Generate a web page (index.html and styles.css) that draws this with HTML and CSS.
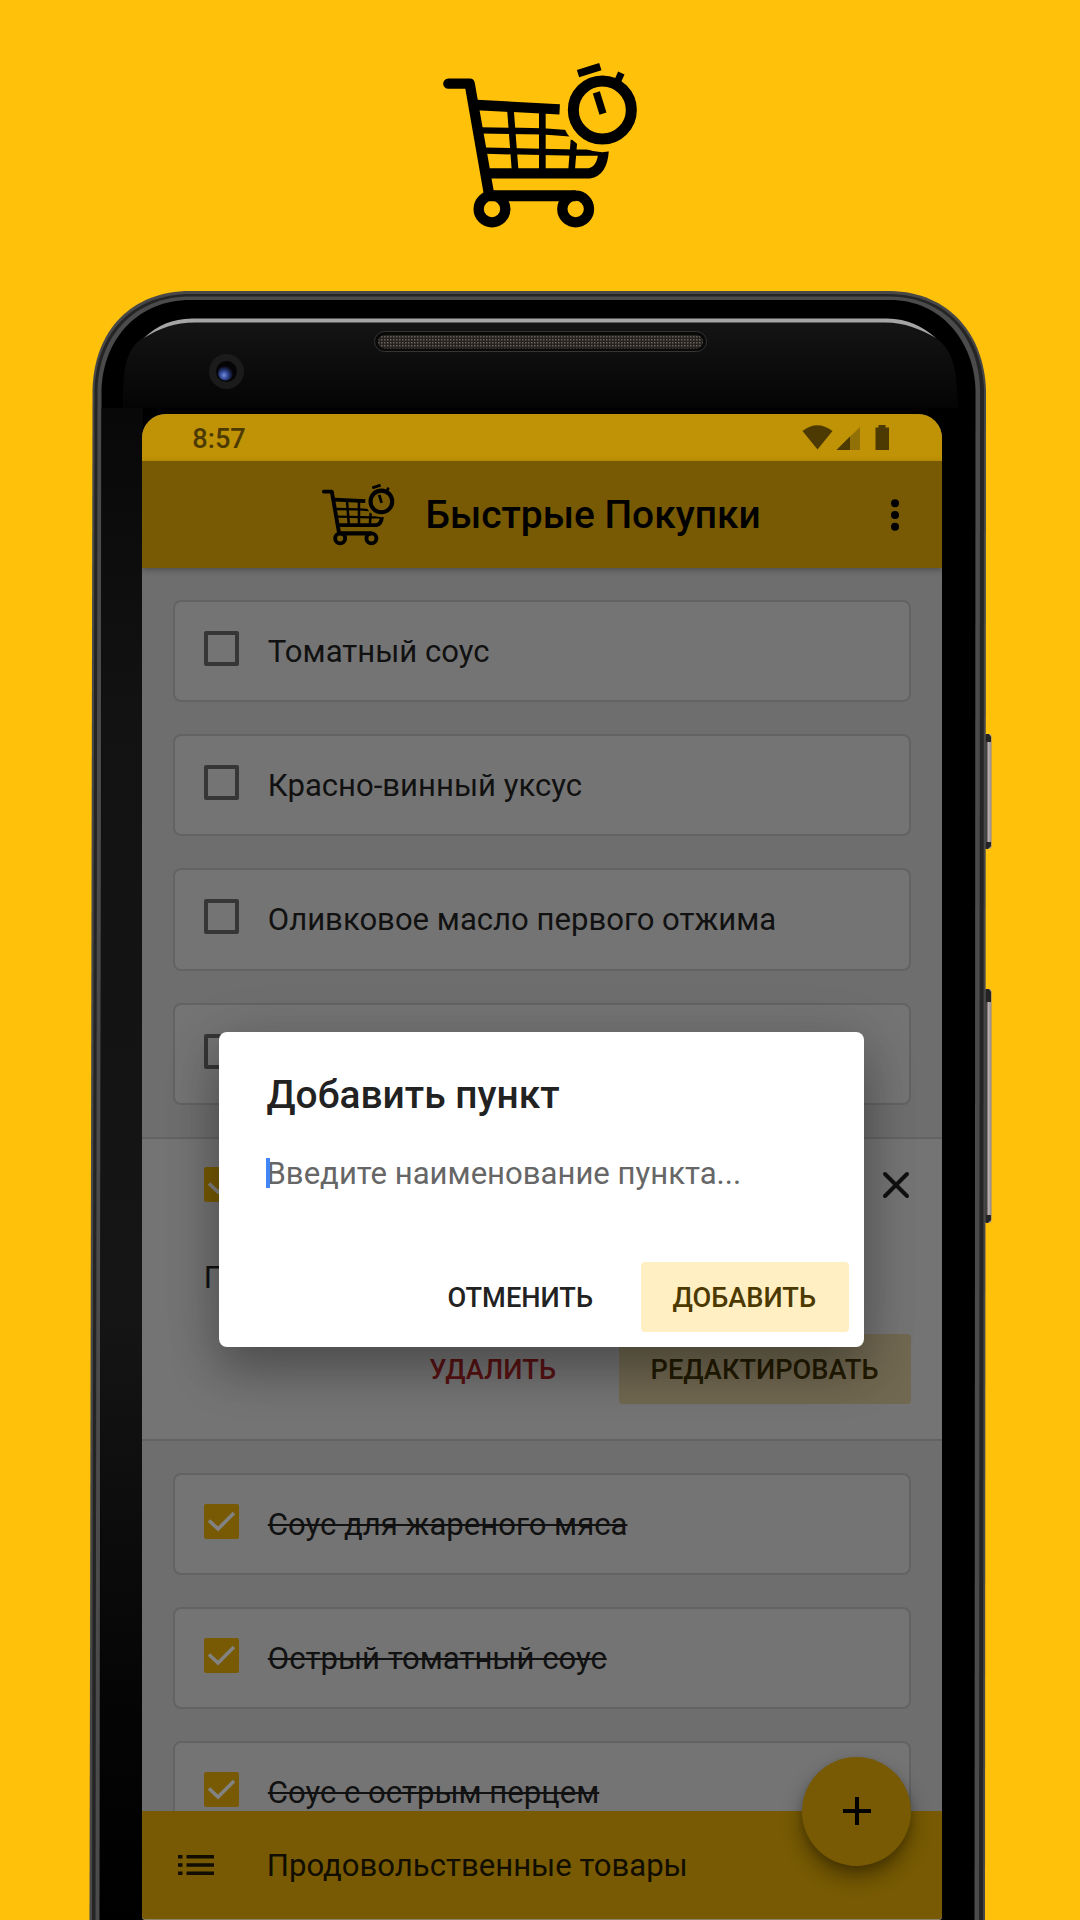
FILE: index.html
```html
<!DOCTYPE html>
<html lang="ru">
<head>
<meta charset="utf-8">
<title>Быстрые Покупки</title>
<link rel="stylesheet" href="styles.css">
</head>
<body>
<svg width="0" height="0" class="defs" aria-hidden="true">
  <mask id="around-watch" maskUnits="userSpaceOnUse" x="0" y="0" width="660" height="570">
    <rect width="660" height="570" fill="#fff"/><circle cx="517" cy="180" r="127" fill="#000"/>
  </mask>
  <symbol id="cart" viewBox="0 0 660 570">
    <g fill="none" stroke="currentColor" mask="url(#around-watch)">
      <path d="M55 101H119L177 432" stroke-width="31" stroke-linecap="round" stroke-linejoin="round"/>
      <path d="M140 165L389 178" stroke-width="31"/>
      <path d="M150 241L340 244L420 250M165 302L437 308H530" stroke-width="19"/>
      <path d="M241 175L256 370M337 180V370M432 270L424 370" stroke-width="20"/>
      <path d="M178 370H478Q517 364 521 302" stroke-width="31"/>
      <path d="M178 437H437" stroke-width="33"/>
      <circle cx="186" cy="477" r="40" stroke-width="31"/>
      <circle cx="437" cy="477" r="40" stroke-width="31"/>
    </g>
    <g fill="none" stroke="currentColor">
      <circle cx="517" cy="180" r="87" stroke-width="33"/>
      <path d="M499 127L519 191" stroke-width="22"/>
      <path d="M444 71L511 50" stroke-width="23"/>
      <path d="M574 69L561 98" stroke-width="21"/>
    </g>
  </symbol>
  <symbol id="tick" viewBox="0 0 35 35"><path d="M5 16.500L14 25L30 9" fill="none" stroke="currentColor" stroke-width="3.600"/></symbol>
</svg>

<svg class="device" viewBox="0 0 1080 1920" aria-hidden="true">
  <defs>
    <linearGradient id="forehead" x1="0" y1="0" x2="0" y2="1"><stop offset="0" stop-color="#151515"/><stop offset="1" stop-color="#040404"/></linearGradient>
    <linearGradient id="side" x1="0" y1="0" x2="0" y2="1"><stop offset="0" stop-color="#080808"/><stop offset=".2" stop-color="#121212"/><stop offset=".6" stop-color="#151515"/><stop offset=".85" stop-color="#050505"/><stop offset="1" stop-color="#000"/></linearGradient>
    <linearGradient id="key" x1="0" y1="0" x2="1" y2="0"><stop offset="0" stop-color="#2b2728"/><stop offset=".35" stop-color="#4a4445"/><stop offset=".6" stop-color="#b9b0b1"/><stop offset="1" stop-color="#8e8586"/></linearGradient>
    <radialGradient id="lens" cx=".4" cy=".65" r=".6"><stop offset="0" stop-color="#6f8be0"/><stop offset=".5" stop-color="#2c3f86"/><stop offset="1" stop-color="#07080f"/></radialGradient>
    <pattern id="mesh" width="3" height="3" patternUnits="userSpaceOnUse"><rect width="3" height="3" fill="#26231f"/><rect width="1.500" height="1.500" fill="#67615a"/></pattern>
  </defs>
  <rect x="984" y="734" width="7.500" height="115" rx="3" fill="url(#key)"/>
  <rect x="984" y="989" width="7.500" height="234" rx="3" fill="url(#key)"/>
  <path d="M986 734h3l2 3v5h-5zM986 842h5v4l-3 3h-2zM986 989h3l2 3v10h-5zM986 1215h5v5l-3 3h-2z" fill="#252323"/>
  <path d="M89.500 1920L92.500 390C94 330 132 291 190 291H890C950 292 984 335 986 390L985 1920Z" fill="#484848"/>
  <path d="M92 1920L94.500 390C96 332 134 294 190 294H890C948 295 982 336 984 390L983 1920Z" fill="#252525"/>
  <path d="M95.500 1920L97.500 390C99 334 136 296.500 190 296.500H890C945 297 979 337 980 390L979 1920Z" fill="#4b4b4b"/>
  <path d="M99.500 1920L101.500 390C103 338 139 300 190 300H890C941 300 974 341 975.500 390L974.500 1920Z" fill="#000"/>
  <path d="M123 408V390C124 360 130 346 144 337C158 325 172 319 192 319H887C908 319 922 326 936 338C952 350 957 365 958 408Z" fill="url(#forehead)"/>
  <path d="M101.500 408H143V1920H100Z" fill="url(#side)"/>
  <path d="M144 338C158 325 172 319 192 318.500H887C908 319 922 326 936 338C920 329 905 322.500 885 322.500H195C175 322.500 160 328 144 338Z" fill="#a5a5a5"/>
  <rect x="374.500" y="331.500" width="332" height="20" rx="10" fill="#090909" stroke="#353432"/>
  <rect x="378" y="335" width="325" height="13.500" rx="6.700" fill="url(#mesh)"/>
  <circle cx="226.500" cy="371.500" r="17.500" fill="#1c1b1b"/>
  <circle cx="226.500" cy="371.500" r="10.500" fill="#050508"/>
  <circle cx="225.500" cy="373" r="7.500" fill="url(#lens)"/>
</svg>

<main class="poster">
  <svg class="logo"><use href="#cart"/></svg>

  <div class="screen">
    <div class="status">
      <span class="clock">8:57</span>
      <svg class="status-icons" viewBox="0 0 90 28">
        <path d="M.500 7Q15-4.500 30.500 7L15.500 25.500Z" fill="#4c3a02"/>
        <path d="M34.500 26H58V3Z" fill="#917007"/><path d="M34.500 26H48V12.500Z" fill="#4c3a02"/>
        <path d="M73.500 3.500h3V1h7v2.500h3.500V26H73.500Z" fill="#4c3a02"/>
      </svg>
    </div>
    <header class="appbar">
      <svg class="brand"><use href="#cart"/></svg>
      <h1>Быстрые Покупки</h1>
      <svg class="more" viewBox="0 0 10 34"><circle cx="5" cy="5.300" r="4"/><circle cx="5" cy="17" r="4"/><circle cx="5" cy="28.700" r="4"/></svg>
    </header>

    <section class="list">
      <div class="card"><i class="box"></i><span>Томатный соус</span></div>
      <div class="card"><i class="box"></i><span>Красно-винный уксус</span></div>
      <div class="card"><i class="box"></i><span>Оливковое масло первого отжима</span></div>
      <div class="card"><i class="box"></i></div>
      <article class="open">
        <div class="open-head">
          <svg class="box checked"><use href="#tick"/></svg>
          <svg class="close" viewBox="0 0 28 28"><path d="M3 3L25 25M25 3L3 25"/></svg>
        </div>
        <p class="note">П</p>
        <div class="open-actions">
          <span class="btn delete">УДАЛИТЬ</span>
          <span class="btn edit">РЕДАКТИРОВАТЬ</span>
        </div>
      </article>
      <div class="card done"><svg class="box checked"><use href="#tick"/></svg><span>Соус для жареного мяса</span></div>
      <div class="card done"><svg class="box checked"><use href="#tick"/></svg><span>Острый томатный соус</span></div>
      <div class="card done"><svg class="box checked"><use href="#tick"/></svg><span>Соус с острым перцем</span></div>
    </section>

    <footer class="bottombar">
      <svg class="menu" viewBox="0 0 36 20"><path d="M0 1.800h4.500M8.500 1.800H36M0 10h4.500M8.500 10H36M0 18.200h4.500M8.500 18.200H36"/></svg>
      <span>Продовольственные товары</span>
    </footer>
    <div class="fab"><svg viewBox="0 0 28 28"><path d="M0 14H28M14 0V28"/></svg></div>

    <div class="dialog">
      <h2>Добавить пункт</h2>
      <p class="field">Введите наименование пункта...</p>
      <div class="dialog-actions">
        <span class="btn cancel">ОТМЕНИТЬ</span>
        <span class="btn add">ДОБАВИТЬ</span>
      </div>
    </div>
  </div>
</main>
</body>
</html>
```
FILE: styles.css
```css
* { box-sizing: border-box; }
body {
  margin: 0;
  background: #ffc10a;
  color: #111;
  font-family: Roboto, "Noto Sans", sans-serif;
  font-size: 31.1px;
}
h1, h2, p { margin: 0; font-weight: 500; }
svg { display: block; flex: none; }
.defs { position: absolute; }
.device { position: absolute; left: 0; top: 0; width: 1080px; height: 1920px; }

.poster {
  position: relative;
  display: flex;
  flex-direction: column;
  width: 1080px;
  height: 1920px;
  padding-top: 50px;
  overflow: hidden;
}
.logo { width: 220px; height: 190px; margin-left: 430px; color: #000; }

.screen {
  position: relative;
  display: flex;
  flex-direction: column;
  width: 799.300px;
  height: 1505px;
  margin: 174px 0 0 142.300px;
  border-radius: 24px 24px 3px 3px;
  background: #6e6e6e;
  box-shadow: 0 1px 0 #8f8468;
  overflow: hidden;
}
.status {
  display: flex;
  align-items: center;
  justify-content: space-between;
  height: 47px;
  padding: 0 50px 0 50px;
  background: #c09206;
  color: #4c3a02;
  font-size: 27.200px;
  font-weight: 500;
}
.clock { padding-top: 2px; }
.status-icons { width: 90px; height: 28px; }

.appbar {
  position: relative;
  z-index: 1;
  display: flex;
  align-items: center;
  height: 107px;
  padding: 0 41.500px 0 174.500px;
  background: #775a03;
  color: #000;
  box-shadow: 0 2px 6px rgba(0, 0, 0, .3);
}
.brand { width: 82.200px; height: 71px; }
.appbar h1 { flex: 1; margin: 1px 0 0 26.500px; font-size: 38.900px; line-height: 46px; }
.more { width: 10px; height: 34px; fill: #000; }

.list { display: flex; flex: 1; flex-direction: column; gap: 32px; height: 1243px; padding-top: 32px; overflow: hidden; }
.card {
  display: flex;
  flex: none;
  height: 102.200px;
  margin: 0 30.500px;
  padding: 29px;
  border: 2px solid #636363;
  border-radius: 8px;
  background: #747474;
}
.card span { margin: 2px 0 0 29px; line-height: 37px; white-space: nowrap; }
.done span { text-decoration: line-through; text-decoration-thickness: 2px; }
.box { flex: none; width: 35px; height: 35px; border: 4px solid #363636; border-radius: 2px; }
.checked { border: 0; background: #775a03; color: #828282; }

.open {
  flex: none;
  height: 304.200px;
  padding: 28.500px 30.500px 0 61.500px;
  border: solid #636363;
  border-width: 2px 0;
  background: #747474;
}
.open-head { display: flex; align-items: center; justify-content: space-between; }
.close { width: 28px; height: 28px; margin-right: 1.500px; fill: none; stroke: #111; stroke-width: 4; stroke-linecap: round; }
.note { margin-top: 56.500px; font-weight: 400; line-height: 37px; }
.open-actions { display: flex; justify-content: flex-end; margin-top: 38px; gap: 31px; }

.btn {
  display: flex;
  align-items: center;
  justify-content: center;
  height: 70px;
  padding: 2px 1px 0 0;
  border-radius: 4px;
  font-size: 27.200px;
  font-weight: 500;
}
.delete { width: 190px; color: #581213; }
.edit { width: 292px; background: #716851; color: #221a00; }

.bottombar { display: flex; align-items: center; height: 108px; padding-left: 35.500px; background: #775a03; color: #110d00; }
.bottombar span { margin-left: 53px; }
.menu { width: 36px; height: 20px; stroke: #110d00; stroke-width: 3.600; }

.fab {
  position: absolute;
  right: 30.500px;
  bottom: 53.500px;
  display: flex;
  align-items: center;
  justify-content: center;
  width: 109px;
  height: 109px;
  border-radius: 50%;
  background: #775a03;
  box-shadow: 0 11px 20px rgba(0, 0, 0, .38), 0 3px 6px rgba(0, 0, 0, .12);
}
.fab svg { width: 28px; height: 28px; stroke: #000; stroke-width: 4; }

.dialog {
  position: absolute;
  left: 77px;
  top: 618px;
  z-index: 2;
  width: 644.500px;
  height: 315px;
  padding: 0 15px 0 47.200px;
  border-radius: 8px;
  background: #fff;
  color: #222;
  box-shadow: 0 24px 48px rgba(0, 0, 0, .28), 0 6px 60px rgba(0, 0, 0, .12);
}
.dialog h2 { padding-top: 40px; font-size: 38.900px; line-height: 46px; }
.field { position: relative; height: 30px; margin-top: 40px; font-weight: 400; line-height: 32px; color: #666; }
.field::before { content: ""; position: absolute; left: 0; top: 0; width: 4px; height: 30px; background: #4285f4; }
.dialog-actions { display: flex; justify-content: flex-end; gap: 16px; margin-top: 74px; }
.cancel { width: 208px; }
.add { width: 208px; background: #ffefc2; color: #4c3900; }
```
